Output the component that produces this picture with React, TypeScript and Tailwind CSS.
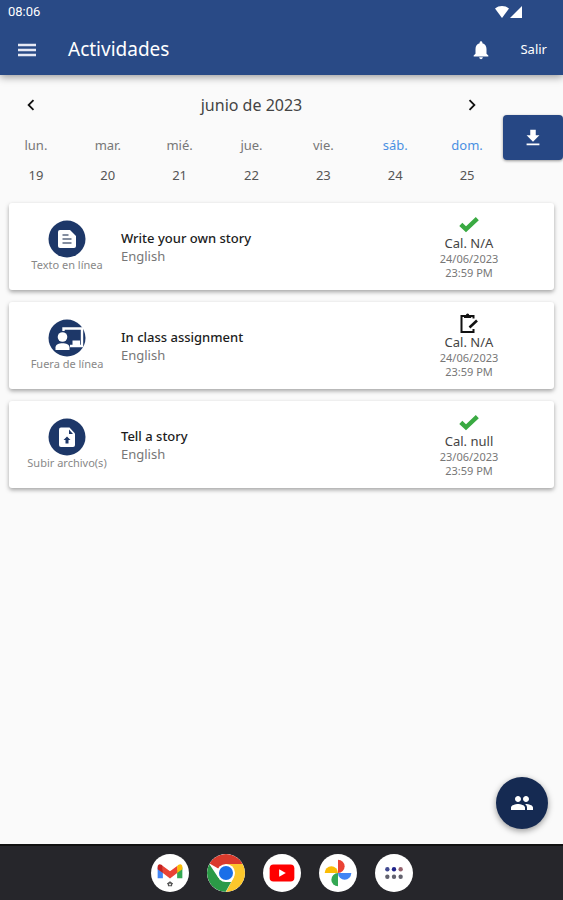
import React from 'react';
import { MdNotifications, MdChevronLeft, MdChevronRight, MdFileDownload, MdPeople } from 'react-icons/md';

type Kind = 'text' | 'offline' | 'upload';

interface Activity {
  kind: Kind;
  label: string;
  title: string;
  subject: string;
  done: boolean;
  grade: string;
  date: string;
  time: string;
}

const activities: Activity[] = [
  {
    kind: 'text',
    label: 'Texto en línea',
    title: 'Write your own story',
    subject: 'English',
    done: true,
    grade: 'Cal. N/A',
    date: '24/06/2023',
    time: '23:59 PM',
  },
  {
    kind: 'offline',
    label: 'Fuera de línea',
    title: 'In class assignment',
    subject: 'English',
    done: false,
    grade: 'Cal. N/A',
    date: '24/06/2023',
    time: '23:59 PM',
  },
  {
    kind: 'upload',
    label: 'Subir archivo(s)',
    title: 'Tell a story',
    subject: 'English',
    done: true,
    grade: 'Cal. null',
    date: '23/06/2023',
    time: '23:59 PM',
  },
];

const days = [
  { name: 'lun.', num: 19 },
  { name: 'mar.', num: 20 },
  { name: 'mié.', num: 21 },
  { name: 'jue.', num: 22 },
  { name: 'vie.', num: 23 },
  { name: 'sáb.', num: 24, weekend: true },
  { name: 'dom.', num: 25, weekend: true },
];

const KindIcon: React.FC<{ kind: Kind }> = ({ kind }) => (
  <svg viewBox="0 0 38 38" className="h-[38px] w-[38px]" aria-hidden="true">
    <circle cx="19" cy="19" r="18.5" fill="#1d3768" />
    {kind === 'text' && (
      <>
        <path d="M12 10h10l6 6v10a2 2 0 0 1-2 2H12a2 2 0 0 1-2-2V12a2 2 0 0 1 2-2z" fill="#fff" />
        <path d="M14.500 15h6M14.500 19h9M14.500 23h9" stroke="#5b6880" strokeWidth="1.7" />
      </>
    )}
    {kind === 'offline' && (
      <>
        <path d="M15.500 12v-2.500h18.500v17.500H22" fill="none" stroke="#fff" strokeWidth="2.400" />
        <path d="M24.500 21.500H32V26h-7.500z" fill="#fff" />
        <circle cx="14.500" cy="18" r="4.800" fill="#fff" />
        <path d="M7.500 31v-2.500c0-3 3.500-4.200 7-4.200s7 1.200 7 4.200V31z" fill="#fff" />
      </>
    )}
    {kind === 'upload' && (
      <>
        <path d="M13 9.500h8.500l5.500 6V27a2 2 0 0 1-2 2H13a2 2 0 0 1-2-2V11.500a2 2 0 0 1 2-2z" fill="#fff" />
        <path d="M21 11.500V16h4z" fill="#1d3768" />
        <path d="M19 18.500l3.500 3.500h-2v3.500h-3V22h-2z" fill="#1d3768" />
      </>
    )}
  </svg>
);

const CheckIcon = () => (
  <svg viewBox="0 0 20 20" className="h-5 w-5" role="img" aria-label="Entregada">
    <path d="M1.800 10.300l5.200 5L18.300 4.600" fill="none" stroke="#3aaa42" strokeWidth="4.400" />
  </svg>
);

const ClipboardEditIcon = () => (
  <svg viewBox="0 0 20 20" className="h-5 w-5" fill="none" stroke="#111" role="img" aria-label="Pendiente">
    <path d="M14.500 5.500V3H2.500v16H14.500v-3" strokeWidth="2" />
    <path d="M5 2h2a1.600 1.600 0 0 1 3.200 0h2v3H5z" fill="#111" stroke="none" />
    <path d="M10.500 14.500l7.500-7" strokeWidth="2.600" />
  </svg>
);

const ActivityCard: React.FC<{ activity: Activity }> = ({ activity }) => (
  <li className="flex h-[87px] items-center rounded-[3px] bg-white shadow-[0_2px_4px_rgba(0,0,0,0.35)]">
    <div className="flex w-28 shrink-0 flex-col items-center pb-[2px] pl-1">
      <KindIcon kind={activity.kind} />
      <span className="text-[11px] leading-[13px] whitespace-nowrap text-[#888]">{activity.label}</span>
    </div>
    <div className="min-w-0 flex-1">
      <h2 className="text-[13px] leading-[18px] font-medium text-[#1c1c1c]">{activity.title}</h2>
      <p className="text-[13px] leading-[18px] text-[#777]">{activity.subject}</p>
    </div>
    <div className="flex w-[170px] shrink-0 flex-col items-center">
      {activity.done ? <CheckIcon /> : <ClipboardEditIcon />}
      <span className="text-[13px] leading-[18px] text-[#444]">{activity.grade}</span>
      <span className="text-[11px] leading-[14px] text-[#777]">{activity.date}</span>
      <span className="text-[11px] leading-[14px] text-[#777]">{activity.time}</span>
    </div>
  </li>
);

const MenuIcon = () => (
  <svg viewBox="0 0 22 22" className="h-[22px] w-[22px]" aria-hidden="true">
    <path d="M2 6h18M2 11h18M2 16h18" stroke="#e6e9f5" strokeWidth="2.600" />
  </svg>
);

const GmailIcon = () => (
  <svg viewBox="0 0 40 40" className="h-full w-full" aria-hidden="true">
    <path d="M7 14v11.500h5.500V17z" fill="#4285f4" />
    <path d="M27.500 17v8.500H33V14z" fill="#34a853" />
    <path d="M27.500 12.500l1.500-1.200c2-1.400 4-.3 4 2V16l-5.500 4z" fill="#fbbc04" />
    <path d="M12.500 12.500L11 11.300c-2-1.400-4-.3-4 2V16l5.500 4z" fill="#c5221f" />
    <path d="M12.500 12.500l7.500 5.700 7.500-5.700V20L20 25.700 12.500 20z" fill="#ea4335" />
    <path d="M16.800 31l3.200-2.400 3.200 2.400v.8h-1V34h-4.400v-2.200h-1z" fill="#555" />
    <circle cx="20" cy="32" r="1" fill="#fff" />
  </svg>
);

const ChromeIcon = () => (
  <svg viewBox="0 0 40 40" className="h-full w-full" aria-hidden="true">
    <path d="M20 20L2.680 10A20 20 0 0 1 37.320 10z" fill="#db3b2d" />
    <path d="M20 10.500H37.600A20 20 0 0 1 20 40L28.200 24.700z" fill="#fcc72b" />
    <path d="M2.400 10.500L11.800 24.700 20 29.500h5.400L19.500 40A20 20 0 0 1 2.400 10.500z" fill="#2b9a47" />
    <circle cx="20" cy="20" r="9.500" fill="#fff" />
    <circle cx="20" cy="20" r="7.400" fill="#1a6fe8" />
  </svg>
);

const YoutubeIcon = () => (
  <svg viewBox="0 0 40 40" className="h-full w-full" aria-hidden="true">
    <rect x="7" y="11" width="26" height="18" rx="4" fill="#f00" />
    <path d="M17 16v8l7-4z" fill="#fff" />
  </svg>
);

const PhotosIcon = () => (
  <svg viewBox="0 0 40 40" className="h-full w-full" aria-hidden="true">
    <path d="M20 20V6a7 7 0 0 1 0 14z" fill="#ea4335" />
    <path d="M20 20h14a7 7 0 0 1-14 0z" fill="#4285f4" />
    <path d="M20 20v14a7 7 0 0 1 0-14z" fill="#34a853" />
    <path d="M20 20H6a7 7 0 0 1 14 0z" fill="#fbbc04" />
  </svg>
);

const AppsIcon = () => (
  <svg viewBox="0 0 40 40" className="h-full w-full" aria-hidden="true">
    <circle cx="13" cy="16" r="2.300" fill="#414a91" />
    <circle cx="20" cy="16" r="2.300" fill="#20248a" />
    <circle cx="27" cy="16" r="2.300" fill="#95636f" />
    <circle cx="13" cy="24" r="2.300" fill="#62626e" />
    <circle cx="20" cy="24" r="2.300" fill="#62626e" />
    <circle cx="27" cy="24" r="2.300" fill="#62626e" />
  </svg>
);

const dock = [
  { name: 'Gmail', Icon: GmailIcon },
  { name: 'Chrome', Icon: ChromeIcon },
  { name: 'YouTube', Icon: YoutubeIcon },
  { name: 'Fotos', Icon: PhotosIcon },
  { name: 'Aplicaciones', Icon: AppsIcon },
];

const Header = () => (
  <header className="bg-[#294a86] text-white shadow-[0_2px_8px_rgba(0,0,0,0.4)]">
    <div className="flex h-6 items-center justify-between pr-10 pl-2">
      <span className="font-[Roboto,sans-serif] text-[13px]">08:06</span>
      <svg viewBox="0 0 28 12" className="h-3 w-7" fill="#fff" aria-hidden="true">
        <path d="M0 2.500C4-.8 10-.8 14 2.500L7 12z" />
        <path d="M27 0v12H15z" />
      </svg>
    </div>
    <div className="flex h-[51px] items-center px-4">
      <button type="button" aria-label="Menú">
        <MenuIcon />
      </button>
      <h1 className="ml-[30px] flex-1 text-[19px]">Actividades</h1>
      <button type="button" aria-label="Notificaciones" className="mr-7">
        <MdNotifications className="h-[22px] w-[22px]" />
      </button>
      <button type="button" className="text-[13px]">
        Salir
      </button>
    </div>
  </header>
);

const WeekCalendar = () => (
  <div className="min-w-0 flex-1">
    <div className="flex h-[30px] items-center justify-between px-5">
      <button type="button" aria-label="Semana anterior">
        <MdChevronLeft className="h-[22px] w-[22px] text-[#111]" />
      </button>
      <span className="text-[16px] text-[#444]">junio de 2023</span>
      <button type="button" aria-label="Semana siguiente">
        <MdChevronRight className="h-[22px] w-[22px] text-[#111]" />
      </button>
    </div>
    <div className="mt-[10px] grid grid-cols-7 text-center">
      {days.map((day) => (
        <div key={day.num} className="text-[13px] leading-[30px] text-[#555]">
          <div className={day.weekend ? 'text-[#4a90e2]' : 'text-[#777]'}>{day.name}</div>
          <div>{day.num}</div>
        </div>
      ))}
    </div>
  </div>
);

export default function App() {
  return (
    <div className="flex min-h-screen flex-col bg-[#fafafa] font-['Noto_Sans','Open_Sans',sans-serif]">
      <Header />
      <main className="flex flex-1 flex-col">
        <section className="flex items-start pt-[15px]">
          <WeekCalendar />
          <button
            type="button"
            aria-label="Descargar"
            className="mt-[25px] flex h-[45px] w-[60px] items-center justify-center rounded-[4px] bg-[#264784] text-white shadow-[0_1px_3px_rgba(0,0,0,0.4)]"
          >
            <MdFileDownload className="h-[22px] w-[22px]" />
          </button>
        </section>
        <ul className="mt-[13px] flex flex-col gap-3 px-[9px]">
          {activities.map((activity) => (
            <ActivityCard key={activity.title} activity={activity} />
          ))}
        </ul>
        <div className="mt-auto flex justify-end pr-[15px] pb-[15px]">
          <button
            type="button"
            aria-label="Grupos"
            className="flex h-[52px] w-[52px] items-center justify-center rounded-full bg-[#152a52] text-white shadow-[0_2px_6px_rgba(0,0,0,0.4)]"
          >
            <MdPeople className="h-6 w-6" />
          </button>
        </div>
      </main>
      <nav className="flex h-14 items-center justify-center gap-[18px] border-t-2 border-[#111] bg-[#26262b]">
        {dock.map(({ name, Icon }) => (
          <button key={name} type="button" aria-label={name} className="h-[38px] w-[38px] overflow-hidden rounded-full bg-white">
            <Icon />
          </button>
        ))}
      </nav>
    </div>
  );
}
